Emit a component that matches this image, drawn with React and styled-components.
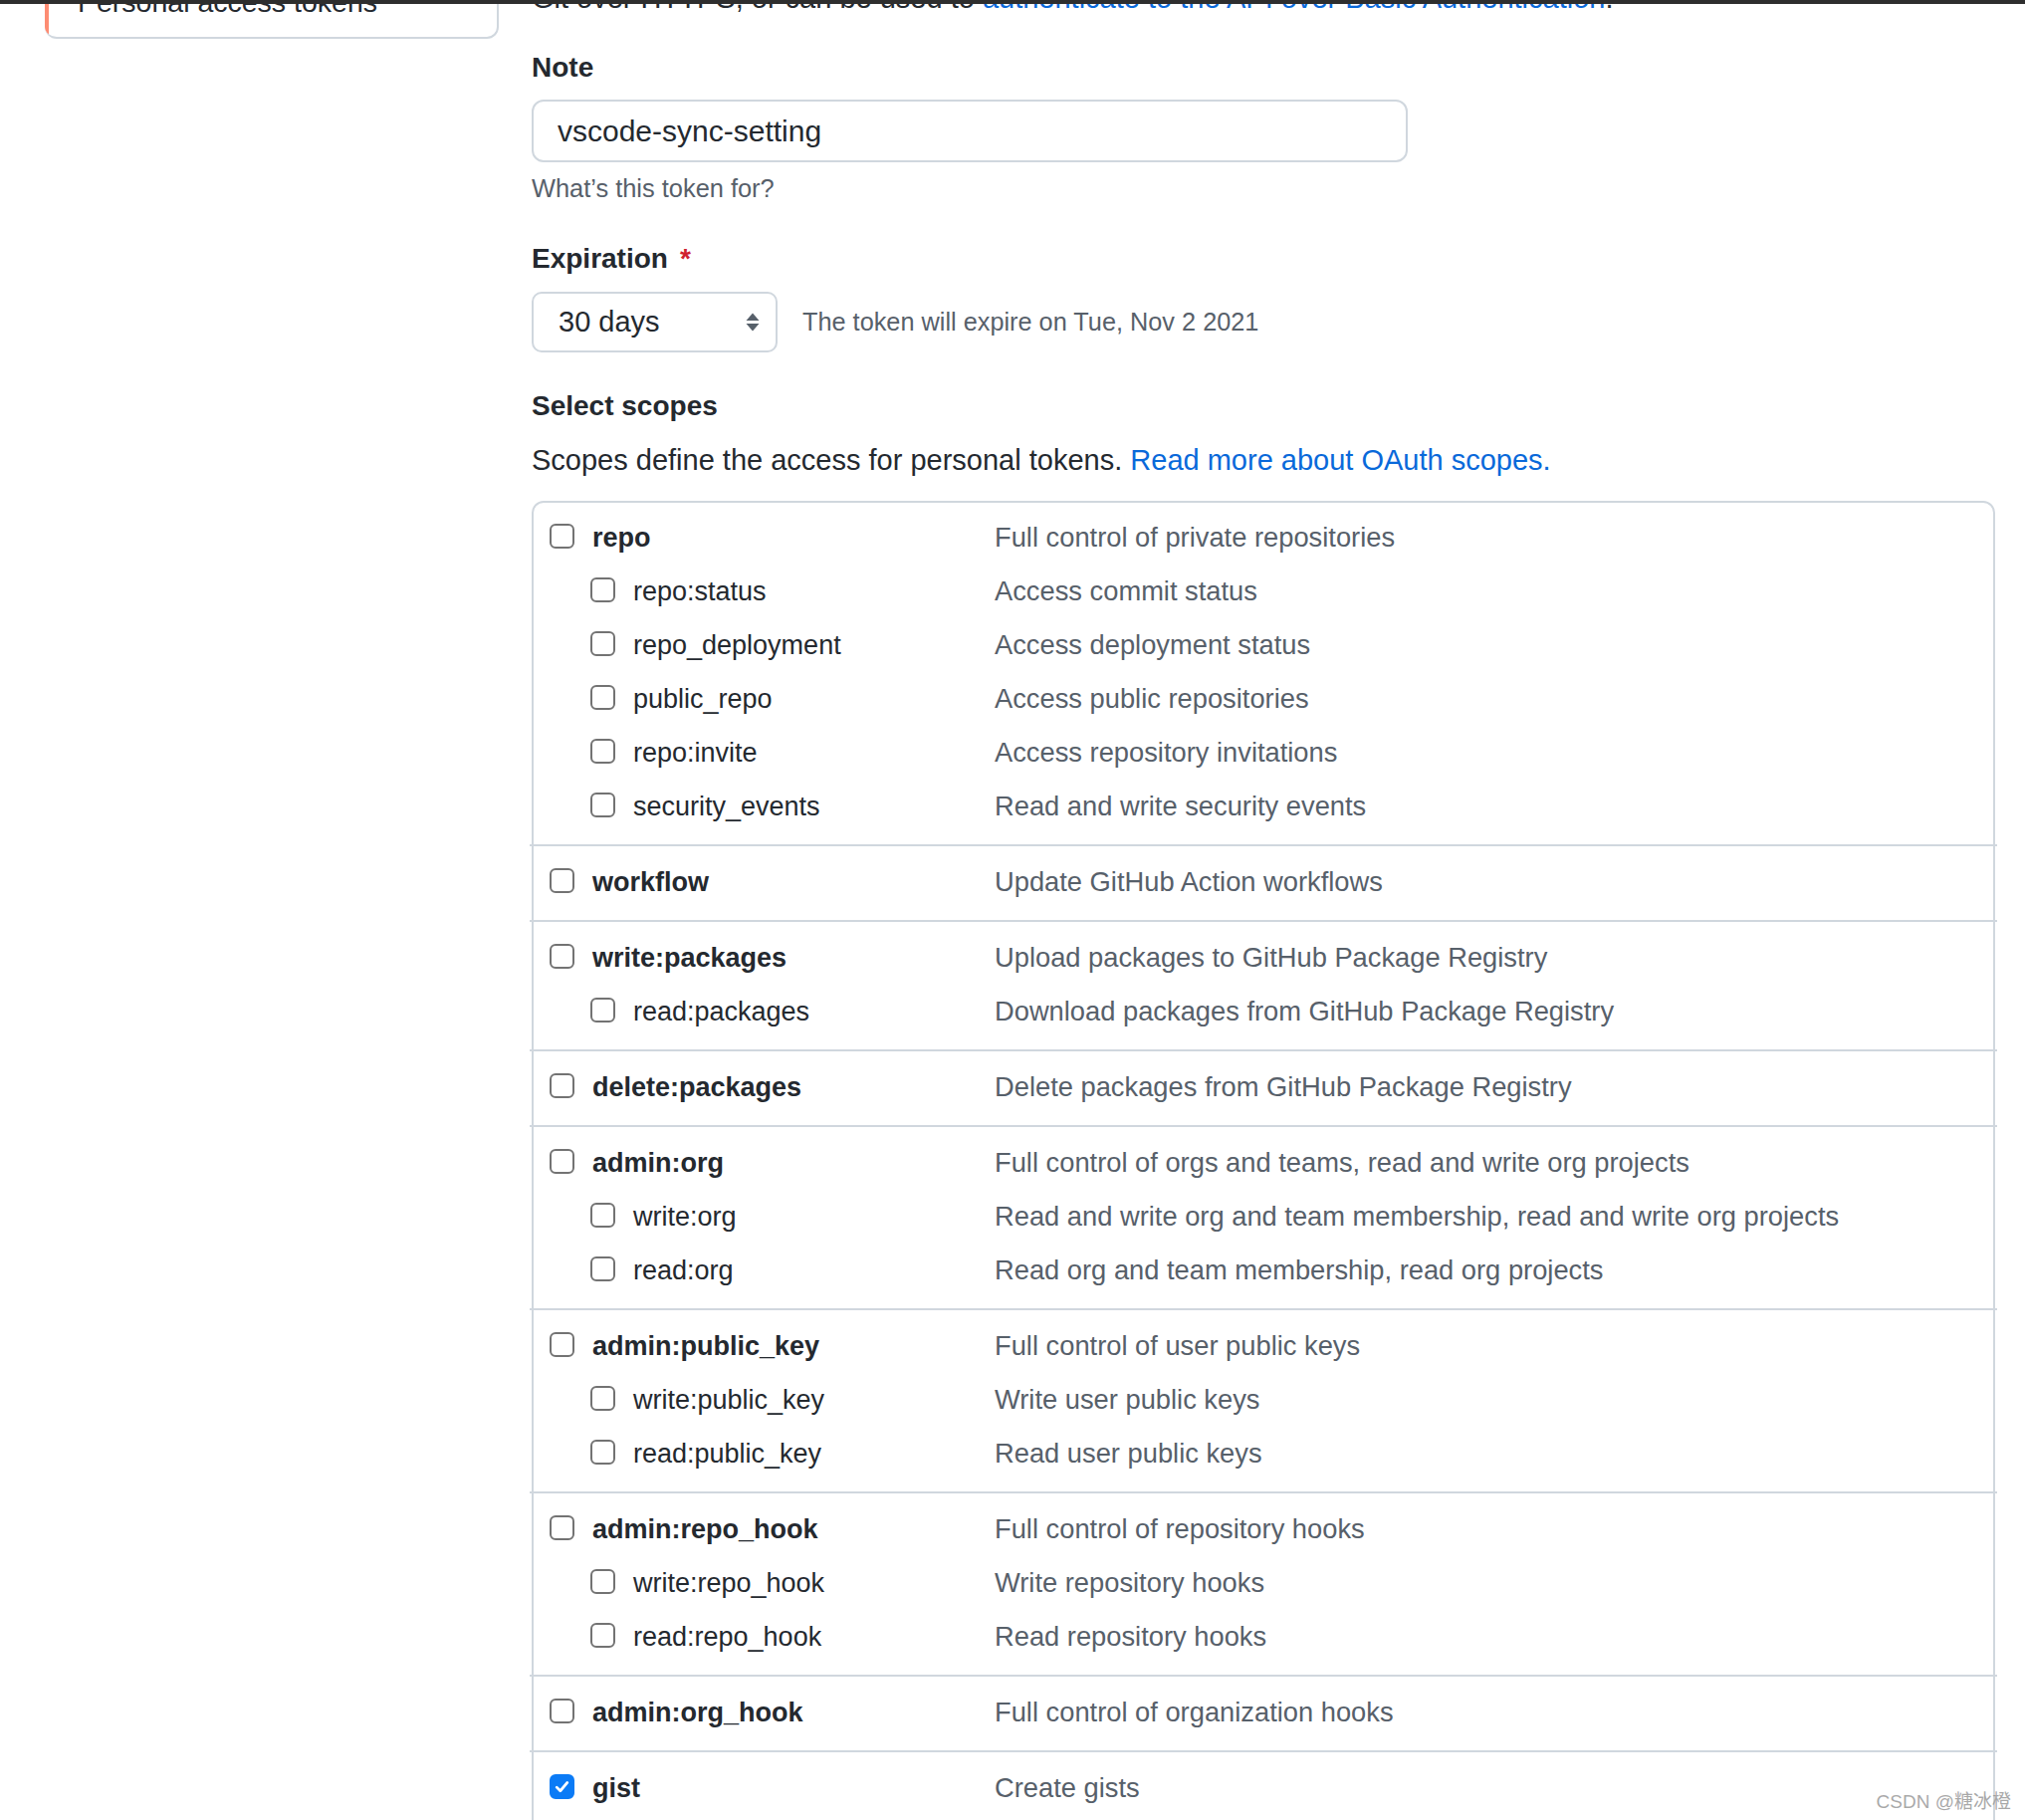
import React from 'react'
import styled, { createGlobalStyle } from 'styled-components'

const GlobalStyle = createGlobalStyle`
  html, body {
    margin: 0;
    padding: 0;
    background: #ffffff;
  }
  body {
    font-family: "Liberation Sans", Arial, sans-serif;
    color: #24292f;
  }
`

const Screen = styled.div`
  position: relative;
  height: 1828px;
  overflow: hidden;
  display: flex;
  flex-direction: column;
`
const TopBar = styled.div`
  flex: none;
  height: 4px;
  background: #2e2e2e;
`
const Viewport = styled.div`
  flex: 1;
  overflow: hidden;
`
const Layout = styled.div`
  display: flex;
  align-items: flex-start;
  gap: 33px;
  padding: 0 30px 0 45px;
  margin-top: -39px;
`
const SideNav = styled.nav`
  flex: none;
  width: 456px;
  box-sizing: border-box;
  border: 2px solid #d0d7de;
  border-left: 0;
  border-radius: 12px;
  overflow: hidden;
`
const NavItem = styled.a`
  display: block;
  padding: 14px 0 14px 29px;
  border-left: 4px solid ${p => (p.$selected ? '#fd8c73' : 'transparent')};
  font-size: 28.5px;
  line-height: 42px;
  color: #24292f;
  text-decoration: none;
`
const Main = styled.main`
  flex: 1;
  min-width: 0;
`
const Lead = styled.p`
  margin: ${p => p.$top}px 0 0;
  font-size: 29px;
  line-height: 42px;
  color: #24292f;
`
const TextLink = styled.a`
  color: #0969da;
  text-decoration: none;
`
const FieldLabel = styled.label`
  display: block;
  margin-top: ${p => p.$top}px;
  font-size: 28px;
  font-weight: 700;
  line-height: 42px;
  color: #24292f;
`
const Required = styled.span`
  margin-left: 12px;
  color: #cf222e;
`
const TextInput = styled.input`
  display: block;
  box-sizing: border-box;
  width: 880px;
  height: 63px;
  margin-top: 11px;
  padding: 0 24px;
  border: 2px solid #d0d7de;
  border-radius: 12px;
  font-family: inherit;
  font-size: 30px;
  color: #24292f;
  background: #ffffff;
  outline: none;
`
const Hint = styled.p`
  margin: 8px 0 0;
  font-size: 25.4px;
  line-height: 36px;
  color: #57606a;
`
const SelectRow = styled.div`
  display: flex;
  align-items: center;
  margin-top: 12px;
`
const SelectBox = styled.div`
  box-sizing: border-box;
  width: 247px;
  height: 61px;
  display: flex;
  align-items: center;
  justify-content: space-between;
  padding: 0 16px 0 25px;
  border: 2px solid #d0d7de;
  border-radius: 10px;
  font-size: 29px;
  color: #24292f;
`
const ExpiryNote = styled.span`
  margin-left: 25px;
  font-size: 25.3px;
  color: #57606a;
`
const ScopeBox = styled.div`
  margin-top: 20px;
  border: 2px solid #d0d7de;
  border-radius: 12px;
`
const ScopeGroup = styled.div`
  margin: 0 -4px;
  padding: 9px 4px 11px;
  border-top: 2px solid #d0d7de;
  &:first-child {
    border-top: 0;
    padding-top: 8px;
  }
`
const ScopeRow = styled.div`
  display: grid;
  grid-template-columns: 447px 1fr;
  align-items: center;
  height: 54px;
  padding-left: 16px;
`
const ScopeName = styled.label`
  display: flex;
  align-items: center;
  gap: 18px;
  padding-left: ${p => (p.$child ? 41 : 0)}px;
  font-size: 27px;
  font-weight: ${p => (p.$child ? 400 : 700)};
  color: #24292f;
`
const ScopeDesc = styled.span`
  font-size: 27.3px;
  color: #57606a;
`
const Checkbox = styled.span`
  flex: none;
  box-sizing: border-box;
  width: 25px;
  height: 25px;
  margin-bottom: 4px;
  display: flex;
  align-items: center;
  justify-content: center;
  border-radius: 6px;
  border: 2px solid ${p => (p.$checked ? '#0b7bf6' : '#737373')};
  background: ${p => (p.$checked ? '#0b7bf6' : '#ffffff')};
`
const Watermark = styled.div`
  position: absolute;
  right: 14px;
  bottom: 9px;
  font-family: "Liberation Sans", "Noto Sans CJK SC", sans-serif;
  font-size: 19px;
  line-height: 19px;
  color: rgba(140, 140, 140, 0.75);
`

const scopeGroups = [
  [
    ['repo', 'Full control of private repositories'],
    ['repo:status', 'Access commit status'],
    ['repo_deployment', 'Access deployment status'],
    ['public_repo', 'Access public repositories'],
    ['repo:invite', 'Access repository invitations'],
    ['security_events', 'Read and write security events'],
  ],
  [['workflow', 'Update GitHub Action workflows']],
  [
    ['write:packages', 'Upload packages to GitHub Package Registry'],
    ['read:packages', 'Download packages from GitHub Package Registry'],
  ],
  [['delete:packages', 'Delete packages from GitHub Package Registry']],
  [
    ['admin:org', 'Full control of orgs and teams, read and write org projects'],
    ['write:org', 'Read and write org and team membership, read and write org projects'],
    ['read:org', 'Read org and team membership, read org projects'],
  ],
  [
    ['admin:public_key', 'Full control of user public keys'],
    ['write:public_key', 'Write user public keys'],
    ['read:public_key', 'Read user public keys'],
  ],
  [
    ['admin:repo_hook', 'Full control of repository hooks'],
    ['write:repo_hook', 'Write repository hooks'],
    ['read:repo_hook', 'Read repository hooks'],
  ],
  [['admin:org_hook', 'Full control of organization hooks']],
  [['gist', 'Create gists']],
  [['notifications', 'Access notifications']],
]

const checkedScopes = ['gist']

const SelectArrows = () => (
  <svg width="14" height="19" viewBox="0 0 14 19">
    <path d="M7 0.5 L13.5 8 H0.5 Z" fill="#57606a" />
    <path d="M0.5 11 H13.5 L7 18.5 Z" fill="#57606a" />
  </svg>
)

const CheckMark = () => (
  <svg width="17" height="17" viewBox="0 0 16 16">
    <path d="M3 8.6 L6.4 12 L13 4.2" fill="none" stroke="#ffffff" strokeWidth="2.6" strokeLinecap="round" strokeLinejoin="round" />
  </svg>
)

function Scope({ name, desc, child }) {
  const checked = checkedScopes.includes(name)
  return (
    <ScopeRow>
      <ScopeName $child={child}>
        <Checkbox $checked={checked}>{checked && <CheckMark />}</Checkbox>
        {name}
      </ScopeName>
      <ScopeDesc>{desc}</ScopeDesc>
    </ScopeRow>
  )
}

export default function App() {
  return (
    <Screen>
      <GlobalStyle />
      <TopBar />
      <Viewport>
        <Layout>
          <SideNav>
            <NavItem $selected>Personal access tokens</NavItem>
          </SideNav>
          <Main>
            <Lead $top={12}>
              Git over HTTPS, or can be used to{' '}
              <TextLink>authenticate to the API over Basic Authentication</TextLink>.
            </Lead>

            <FieldLabel $top={28}>Note</FieldLabel>
            <TextInput defaultValue="vscode-sync-setting" />
            <Hint>What’s this token for?</Hint>

            <FieldLabel $top={32}>
              Expiration<Required>*</Required>
            </FieldLabel>
            <SelectRow>
              <SelectBox>
                <span>30 days</span>
                <SelectArrows />
              </SelectBox>
              <ExpiryNote>The token will expire on Tue, Nov 2 2021</ExpiryNote>
            </SelectRow>

            <FieldLabel $top={33}>Select scopes</FieldLabel>
            <Lead $top={12}>
              Scopes define the access for personal tokens.{' '}
              <TextLink>Read more about OAuth scopes.</TextLink>
            </Lead>

            <ScopeBox>
              {scopeGroups.map(group => (
                <ScopeGroup key={group[0][0]}>
                  {group.map(([name, desc], i) => (
                    <Scope key={name} name={name} desc={desc} child={i > 0} />
                  ))}
                </ScopeGroup>
              ))}
            </ScopeBox>
          </Main>
        </Layout>
      </Viewport>
      <Watermark>CSDN @糖冰橙</Watermark>
    </Screen>
  )
}
